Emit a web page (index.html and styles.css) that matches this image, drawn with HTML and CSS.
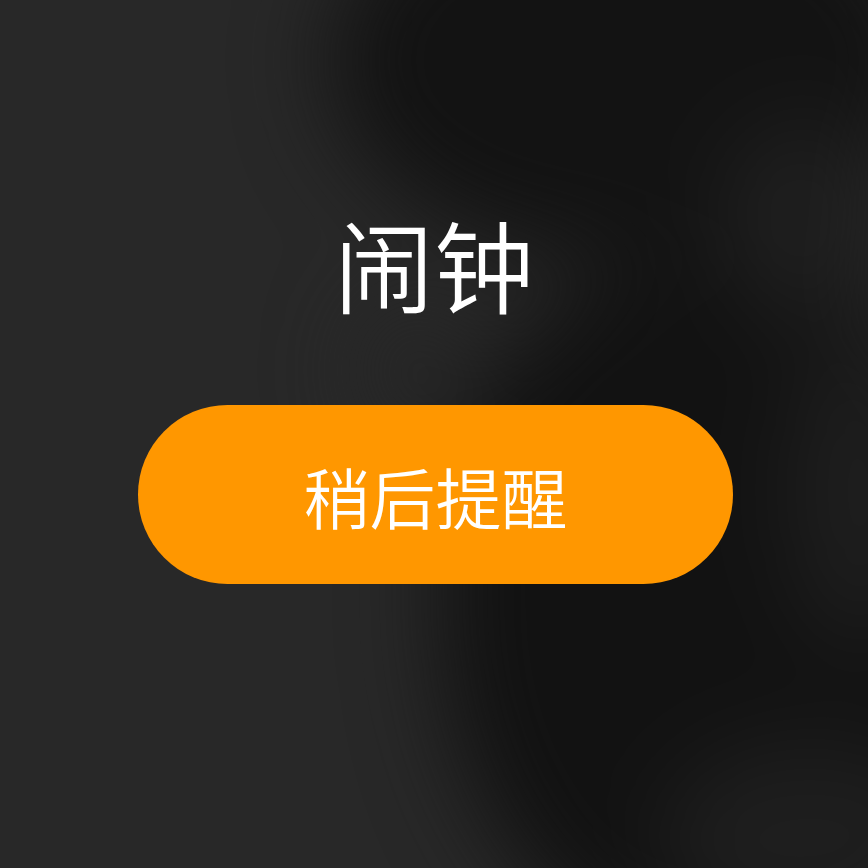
FILE: index.html
```html
<!DOCTYPE html>
<html lang="zh-CN">
<head>
<meta charset="utf-8">
<link rel="stylesheet" href="styles.css">
</head>
<body>
<div class="screen">
  <div class="backdrop">
    <div class="blob b1"></div>
    <div class="blob b2"></div>
    <div class="blob b3"></div>
    <div class="blob b4"></div>
    <div class="blob b5"></div>
    <div class="blob b6"></div>
  </div>
  <main class="content">
    <h1 class="title">闹钟</h1>
    <button class="snooze">稍后提醒</button>
  </main>
</div>
</body>
</html>
```
FILE: styles.css
```css
html, body {
  margin: 0;
  padding: 0;
  background: #272727;
}
.screen {
  position: relative;
  width: 868px;
  height: 868px;
  overflow: hidden;
  background: #282828;
  font-family: "Noto Sans CJK SC", "Noto Sans", sans-serif;
}
.backdrop {
  position: absolute;
  inset: 0;
  filter: blur(45px);
}
.blob {
  position: absolute;
  border-radius: 50%;
}
.b1 {
  left: 330px; top: -140px; width: 600px; height: 400px;
  background: #131313;
}
.b2 {
  left: 440px; top: 260px; width: 540px; height: 700px;
  background: #121212;
  border-radius: 45% 40% 30% 50%;
}
.b3 {
  left: 720px; top: 120px; width: 180px; height: 200px;
  background: #1f1f1f;
}
.b4 {
  left: 790px; top: 330px; width: 140px; height: 320px;
  background: #1e1e1e;
}
.b5 {
  left: 660px; top: 740px; width: 300px; height: 200px;
  background: #1e1e1e;
}
.b6 {
  left: 360px; top: 300px; width: 110px; height: 140px;
  background: #262626;
}
.content {
  position: relative;
  display: flex;
  flex-direction: column;
  align-items: center;
  padding-top: 211px;
}
.title {
  margin: 0;
  font-size: 100px;
  font-weight: 350;
  line-height: 104px;
  color: #ffffff;
}
.snooze {
  margin-top: 90px;
  margin-left: 3px;
  width: 595px;
  height: 179px;
  border: none;
  border-radius: 90px;
  background: #ff9700;
  color: #ffffff;
  font-family: "Noto Sans CJK SC", "Noto Sans", sans-serif;
  font-size: 66px;
  font-weight: 350;
  padding: 0;
  line-height: 1;
}
```
